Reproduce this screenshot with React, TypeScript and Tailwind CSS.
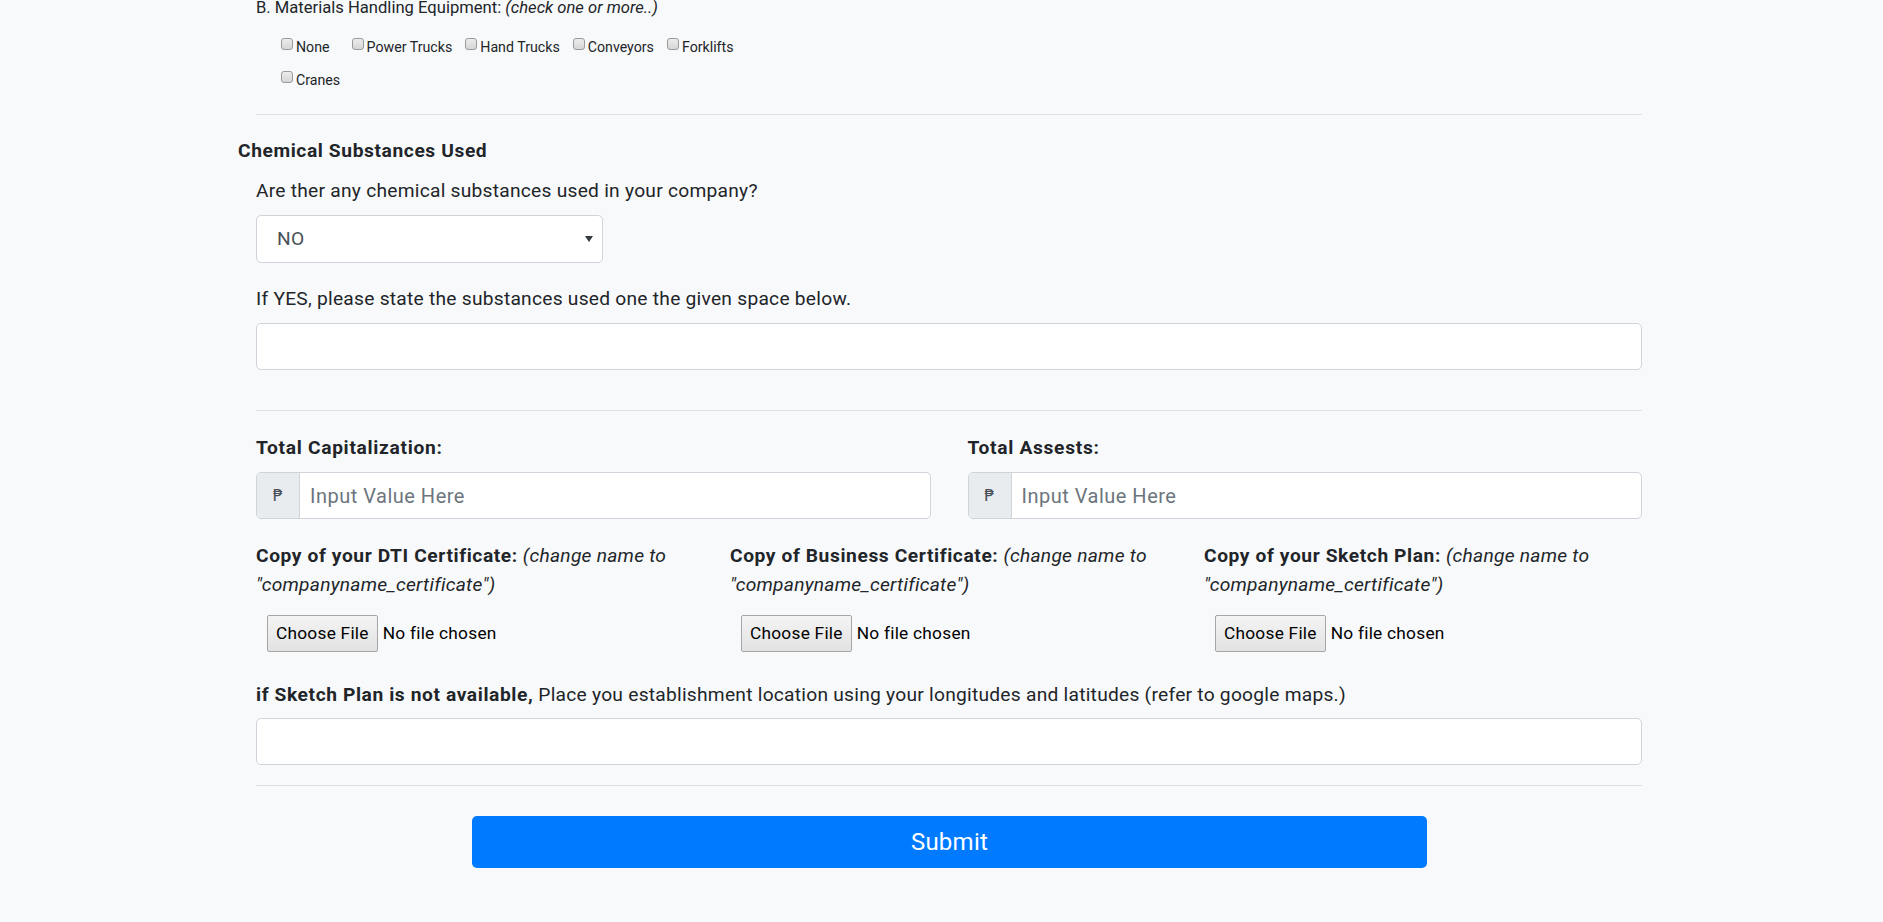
export default function App() {
  const row1 = ['None', 'Power Trucks', 'Hand Trucks', 'Conveyors', 'Forklifts']

  const Check = ({ label, extra }: { label: string; extra?: boolean }) => (
    <label className={`flex items-center ${extra ? 'mr-[22px]' : 'mr-[13px]'}`}>
      <span className="w-[12px] h-[12px] -mt-[6px] rounded-[3px] border border-[#9a9a9a] bg-gradient-to-b from-[#ececec] to-[#d6d6d6]" />
      <span className="ml-[3px] text-[14.2px] text-[#212529]">{label}</span>
    </label>
  )

  const FileCol = ({ title, last }: { title: string; last?: boolean }) => (
    <div className={last ? 'flex-1' : 'w-[474px] shrink-0 pr-[20px]'}>
      <p className="text-[19.2px] leading-[29px] text-[#212529]">
        <b className="font-bold tracking-[0.6px]">{title}</b> <i>(change name to "companyname_certificate")</i>
      </p>
      <div className="mt-[16px] ml-[11px] flex items-center h-[37px]">
        <button className="h-[37px] px-[8px] text-[17.3px] text-black border border-[#a6a6a6] rounded-[2px] bg-gradient-to-b from-[#f4f4f4] to-[#e2e2e2]">
          Choose File
        </button>
        <span className="ml-[5px] text-[17.3px] text-black">No file chosen</span>
      </div>
    </div>
  )

  return (
    <div className="min-h-screen bg-[#f8f9fa] text-[#212529] tracking-[0.25px]" style={{ fontFamily: 'Roboto, "Liberation Sans", sans-serif' }}>
      <div className="ml-[256px] w-[1386px] pb-[56px]">
        {/* Materials handling */}
        <p className="text-[16.6px] leading-[16px] tracking-normal">
          B. Materials Handling Equipment: <i>(check one or more..)</i>
        </p>
        <div className="ml-[25px] mt-[15px] tracking-normal">
          <div className="flex h-[33px] items-center">
            {row1.map((l) => (
              <Check key={l} label={l} extra={l === 'None'} />
            ))}
          </div>
          <div className="flex h-[33px] items-center">
            <Check label="Cranes" />
          </div>
        </div>
        <hr className="mt-[17px] border-0 border-t border-[#dfe0e1]" />

        {/* Chemical substances */}
        <h6 className="-ml-[18px] mt-[21px] text-[19.2px] leading-[29px] font-bold tracking-[0.6px]">Chemical Substances Used</h6>
        <p className="mt-[11px] text-[19.2px] leading-[29px]">Are ther any chemical substances used in your company?</p>
        <div className="mt-[10px] w-[347px] h-[48px] bg-white border border-[#ced4da] rounded-[5px] flex items-center justify-between pl-[20px] pr-[9px]">
          <span className="text-[19.2px] text-[#495057]">NO</span>
          <svg width="8" height="6" viewBox="0 0 8 6">
            <path d="M0 0H8L4 6Z" fill="#343a40" />
          </svg>
        </div>
        <p className="mt-[21px] text-[19.2px] leading-[29px]">If YES, please state the substances used one the given space below.</p>
        <div className="mt-[10px] h-[47px] bg-white border border-[#ced4da] rounded-[5px]" />
        <hr className="mt-[40px] border-0 border-t border-[#dfe0e1]" />

        {/* Capital */}
        <div className="mt-[22px] grid grid-cols-2 gap-x-[37px]">
          {['Total Capitalization:', 'Total Assests:'].map((t) => (
            <div key={t}>
              <p className="text-[19.2px] leading-[29px] font-bold tracking-[0.7px]">{t}</p>
              <div className="mt-[10px] h-[47px] flex border border-[#ced4da] rounded-[5px] overflow-hidden bg-white">
                <span
                  className="w-[43px] bg-[#e9ecef] border-r border-[#ced4da] flex items-center justify-center text-[16px] text-[#495057]"
                  style={{ fontFamily: '"DejaVu Sans", sans-serif' }}
                >
                  ₱
                </span>
                <span className="flex items-center pl-[10px] text-[20px] tracking-[0.5px] text-[#6c757d]">Input Value Here</span>
              </div>
            </div>
          ))}
        </div>

        {/* Files */}
        <div className="mt-[22px] flex">
          <FileCol title="Copy of your DTI Certificate:" />
          <FileCol title="Copy of Business Certificate:" />
          <FileCol title="Copy of your Sketch Plan:" last />
        </div>

        <p className="mt-[28px] text-[19.2px] leading-[29px]">
          <b className="tracking-[0.6px]">if Sketch Plan is not available,</b> Place you establishment location using your longitudes and latitudes (refer to google maps.)
        </p>
        <div className="mt-[9px] h-[47px] bg-white border border-[#ced4da] rounded-[5px]" />
        <hr className="mt-[20px] border-0 border-t border-[#dfe0e1]" />

        <div className="mt-[30px] flex">
          <button className="ml-[216px] w-[955px] h-[52px] bg-[#007bff] rounded-[5px] text-white text-[24px]">Submit</button>
        </div>
      </div>
    </div>
  )
}
